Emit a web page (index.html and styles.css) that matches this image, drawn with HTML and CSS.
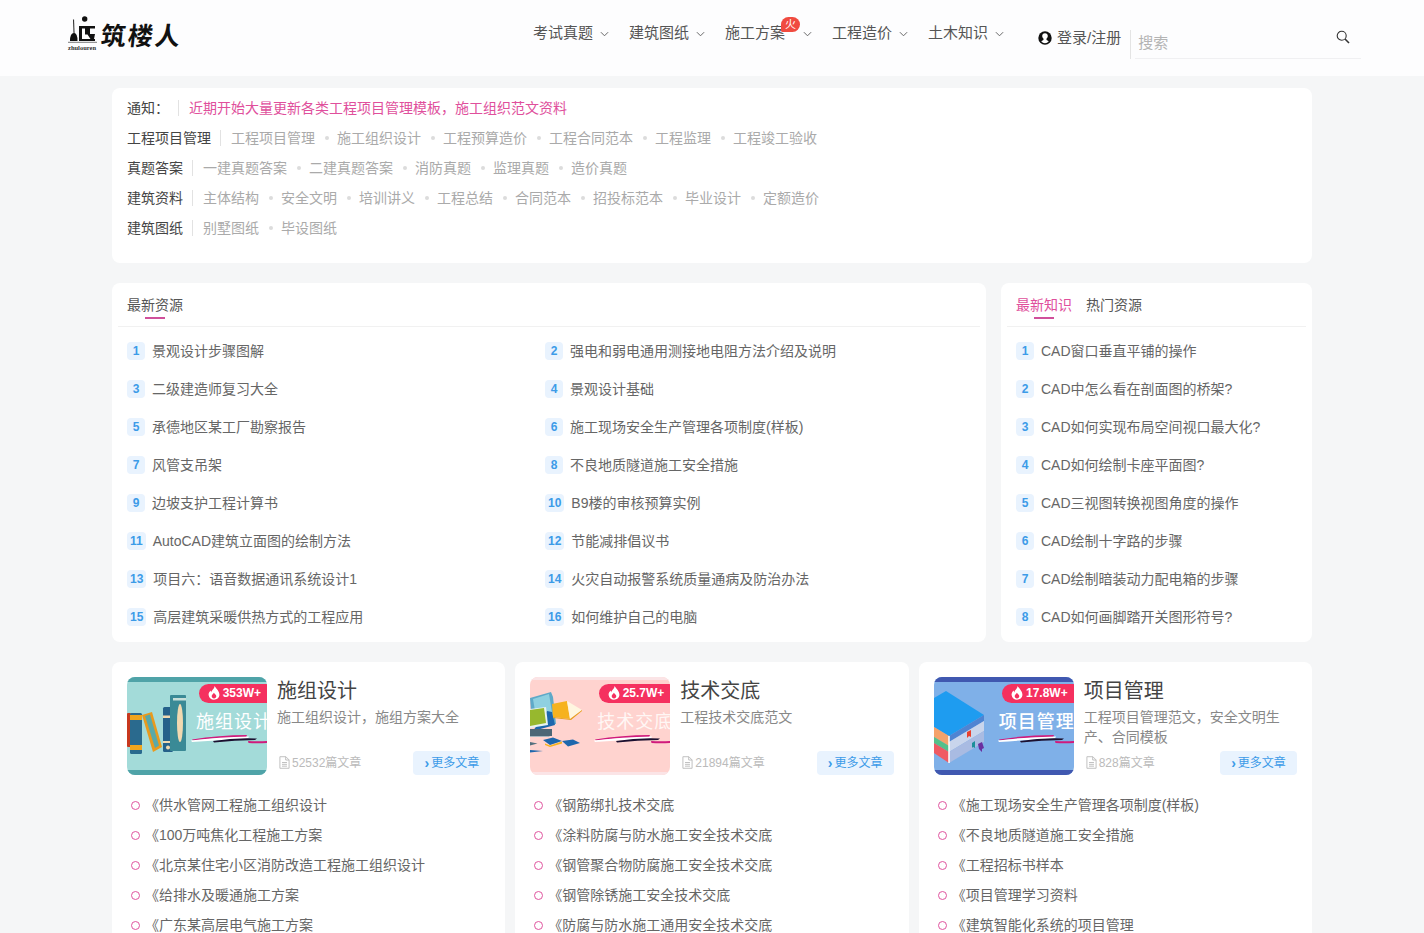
FILE: index.html
```html
<!DOCTYPE html>
<html lang="zh-CN">
<head>
<meta charset="utf-8">
<title>筑楼人</title>
<link rel="stylesheet" href="styles.css">
</head>
<body>
<svg class="defs" width="0" height="0" aria-hidden="true">
  <symbol id="flame" viewBox="0 0 12 14"><path d="M6.400 0C6.900 2.400 3.600 3.900 3.200 6.500 2.900 5.800 2.700 5.200 2.800 4.400 1.300 5.500.4 7.200.6 9c.3 2.900 2.700 4.800 5.400 4.800s5.200-1.900 5.400-4.700C11.600 5.400 8.700 3 6.400 0zM6 12.400c-1.300 0-2.300-.9-2.300-2.100 0-1.300 1.300-2 2.200-3.500 1 1.300 2.400 2.100 2.400 3.500 0 1.200-1 2.100-2.300 2.100z"/></symbol>
  <symbol id="doc" viewBox="0 0 12 14"><path d="M1 .7h6.500L11 4.200v9.100H1z M7.300.8v3.500H11 M3.300 7h5.400 M3.300 9h5.400 M3.300 11h5.400" fill="none" stroke="currentColor"/></symbol>
  <symbol id="chev" viewBox="0 0 10 6"><path d="M1 1l4 4 4-4" fill="none" stroke="currentColor" stroke-width="1.100"/></symbol>
  <symbol id="strokes" viewBox="0 0 140 98">
    <path d="M65 62.500Q92 58 120 58l-1 2.500Q92 60 66 63.500z" fill="#d01a7c"/>
    <path d="M64 63.500Q92 60 122 59.500l-1 2Q92 63 65 65z" fill="#fff"/>
    <path d="M86 64Q108 60.500 130 61.500l-2 1.500Q108 63 87 65.500z" fill="#1c1030"/>
    <path d="M121 64q10 .5 19 0v2q-10 .5-18.500 0z" fill="#d01a7c"/>
  </symbol>
</svg>

<header class="site-header">
  <a class="logo">
    <svg class="logo-mark" viewBox="0 0 32 34" width="32" height="34" aria-hidden="true">
      <circle cx="16.700" cy="3" r="2.700" fill="#111"/>
      <path d="M5.500 3.500l.6 15" stroke="#333" stroke-width="1.100"/>
      <path d="M2 25q0-8 4-8 3.500 0 3.500 8z" fill="#111"/>
      <path d="M11 10h16v2.500h-5V18h5l-1 5h1v2H11V10zm3 2.500V23h8.500l-3-4.500H17v-6z" fill="#111"/>
      <path d="M0 26.300h29" stroke="#444" stroke-width=".7"/>
    </svg>
    <span class="logo-name">筑楼人</span>
    <span class="logo-pin">zhulouren</span>
  </a>
  <nav class="nav">
    <a class="nav-item">考试真题<svg class="chev"><use href="#chev"/></svg></a>
    <a class="nav-item">建筑图纸<svg class="chev"><use href="#chev"/></svg></a>
    <a class="nav-item nav-hot">施工方案<span class="hot">火</span><svg class="chev"><use href="#chev"/></svg></a>
    <a class="nav-item">工程造价<svg class="chev"><use href="#chev"/></svg></a>
    <a class="nav-item">土木知识<svg class="chev"><use href="#chev"/></svg></a>
  </nav>
  <a class="login">
    <svg viewBox="0 0 14 14" width="14" height="14" aria-hidden="true"><circle cx="7" cy="7" r="6.700" fill="#111"/><path d="M7 2.200c1.800 0 2.800 1.300 2.800 2.900 0 1.200-.6 2.200-1.400 2.700l.2 1.200 2.200 1.300c-1 1.200-2.300 1.900-3.800 1.900s-2.800-.7-3.800-1.900L5.400 9l.2-1.200C4.800 7.300 4.200 6.300 4.200 5.100c0-1.600 1-2.900 2.800-2.900z" fill="#fff"/></svg>
    <span>登录/注册</span>
  </a>
  <div class="search">
    <span class="search-text">搜索</span>
    <svg class="search-icon" viewBox="0 0 14 14" width="14" height="14" aria-hidden="true"><circle cx="5.700" cy="5.700" r="4.500" fill="none" stroke="#333" stroke-width="1.100"/><path d="M9 9l4 4" stroke="#333" stroke-width="1.600"/></svg>
  </div>
</header>

<main class="main">
  <section class="card notice">
    <div class="row"><span class="label">通知：</span><a class="notice-link">近期开始大量更新各类工程项目管理模板，施工组织范文资料</a></div>
    <div class="row"><span class="label">工程项目管理</span><a>工程项目管理</a><a>施工组织设计</a><a>工程预算造价</a><a>工程合同范本</a><a>工程监理</a><a>工程竣工验收</a></div>
    <div class="row"><span class="label">真题答案</span><a>一建真题答案</a><a>二建真题答案</a><a>消防真题</a><a>监理真题</a><a>造价真题</a></div>
    <div class="row"><span class="label">建筑资料</span><a>主体结构</a><a>安全文明</a><a>培训讲义</a><a>工程总结</a><a>合同范本</a><a>招投标范本</a><a>毕业设计</a><a>定额造价</a></div>
    <div class="row"><span class="label">建筑图纸</span><a>别墅图纸</a><a>毕设图纸</a></div>
  </section>

  <div class="lists">
    <section class="card panel">
      <div class="tabs"><span class="tab tab-plain">最新资源</span></div>
      <ol class="rank rank-two">
        <li><b>1</b>景观设计步骤图解</li><li><b>2</b>强电和弱电通用测接地电阻方法介绍及说明</li>
        <li><b>3</b>二级建造师复习大全</li><li><b>4</b>景观设计基础</li>
        <li><b>5</b>承德地区某工厂勘察报告</li><li><b>6</b>施工现场安全生产管理各项制度(样板)</li>
        <li><b>7</b>风管支吊架</li><li><b>8</b>不良地质隧道施工安全措施</li>
        <li><b>9</b>边坡支护工程计算书</li><li><b>10</b>B9楼的审核预算实例</li>
        <li><b>11</b>AutoCAD建筑立面图的绘制方法</li><li><b>12</b>节能减排倡议书</li>
        <li><b>13</b>项目六：语音数据通讯系统设计1</li><li><b>14</b>火灾自动报警系统质量通病及防治办法</li>
        <li><b>15</b>高层建筑采暖供热方式的工程应用</li><li><b>16</b>如何维护自己的电脑</li>
      </ol>
    </section>
    <section class="card panel">
      <div class="tabs"><span class="tab tab-active">最新知识</span><span class="tab">热门资源</span></div>
      <ol class="rank">
        <li><b>1</b>CAD窗口垂直平铺的操作</li>
        <li><b>2</b>CAD中怎么看在剖面图的桥架?</li>
        <li><b>3</b>CAD如何实现布局空间视口最大化?</li>
        <li><b>4</b>CAD如何绘制卡座平面图?</li>
        <li><b>5</b>CAD三视图转换视图角度的操作</li>
        <li><b>6</b>CAD绘制十字路的步骤</li>
        <li><b>7</b>CAD绘制暗装动力配电箱的步骤</li>
        <li><b>8</b>CAD如何画脚踏开关图形符号?</li>
      </ol>
    </section>
  </div>

  <div class="cats">
    <section class="card cat">
      <div class="cat-head">
        <div class="thumb thumb-teal">
          <svg class="art" viewBox="0 0 140 98" aria-hidden="true">
            <rect width="140" height="5" fill="#4fa3a8"/><rect y="93" width="140" height="5" fill="#4fa3a8"/>
            <rect y="36" width="4" height="34" rx="1" fill="#c8381e"/>
            <rect x="3" y="36" width="12" height="41" rx="1.500" fill="#2a6a8e"/><rect x="3" y="38" width="12" height="5" fill="#f0a51e"/><rect x="3" y="68" width="12" height="5" fill="#f0a51e"/>
            <path d="M15 38l10-3 10 35-9 5z" fill="#e89a1e"/><path d="M18 39l5-1.500 9 31-4 2.500z" fill="#5aa9a8"/>
            <rect x="36" y="30" width="10" height="45" rx="1.500" fill="#25618a"/><rect x="36" y="38.500" width="10" height="2.500" fill="#f1d9b0"/><rect x="36" y="64" width="10" height="2" fill="#f1d9b0"/><circle cx="41" cy="70.500" r="2" fill="#f1d9b0"/>
            <rect x="43" y="18" width="16" height="56" rx="1" fill="#3a8a96"/><rect x="46" y="21" width="13" height="2.500" fill="#c9dfd9"/><ellipse cx="53" cy="46" rx="3" ry="19" fill="#f1d9b0"/>
            <use href="#strokes" width="140" height="98"/>
          </svg>
          <span class="thumb-title">施组设计</span>
          <span class="heat"><svg><use href="#flame"/></svg>353W+</span>
        </div>
        <div class="info">
          <h2>施组设计</h2>
          <p>施工组织设计，施组方案大全</p>
          <div class="meta"><span class="count"><svg><use href="#doc"/></svg>52532篇文章</span><a class="more"><i>›</i>更多文章</a></div>
        </div>
      </div>
      <ul class="links">
        <li>《供水管网工程施工组织设计</li>
        <li>《100万吨焦化工程施工方案</li>
        <li>《北京某住宅小区消防改造工程施工组织设计</li>
        <li>《给排水及暖通施工方案</li>
        <li>《广东某高层电气施工方案</li>
      </ul>
    </section>

    <section class="card cat">
      <div class="cat-head">
        <div class="thumb thumb-pink">
          <svg class="art" viewBox="0 0 140 98" aria-hidden="true">
            <rect width="140" height="3" fill="#fbe4e6"/><rect y="95" width="140" height="3" fill="#fbe4e6"/>
            <path d="M0 21L21 15l2 5 3 27H2z" fill="#5fa9c8"/><path d="M3 22l16-5 4 24-16 5z" fill="#8fd0e0"/>
            <path d="M17 34l5 1 3 13-22 6z" fill="#1d67ad"/>
            <path d="M0 32l16-2 2 18-18 3z" fill="#e7f2f0"/><path d="M0 33l14-2 2 15-16 3z" fill="#97b82e"/>
            <path d="M0 52h22v7H0z" fill="#4c6676"/><path d="M0 59h20l-1 1H0z" fill="#a8b7c0"/>
            <path d="M22 27l15-3 3 18-17-2z" fill="#f6b21f"/><path d="M37 24l15 9-12 9z" fill="#fff6e0"/><path d="M40 42l12-9 0 1-11 9-18-2v-1z" fill="#e8a020"/>
            <path d="M13 63l10-2.500 9 3.500-12 4z" fill="#1d67ad"/><path d="M15 66.500l5 2 12-4v2l-12 3.500-5-2z" fill="#f6b21f"/>
            <path d="M32 64l11-1.500 7 3.500-12 3.500z" fill="#1d67ad"/>
            <path d="M0 65l7.500 1.500L0 68.500z" fill="#55707f"/><path d="M0 73l13 1-13 1.500z" fill="#1d67ad"/>
            <use href="#strokes" width="140" height="98"/>
          </svg>
          <span class="thumb-title thumb-title-b">技术交底</span>
          <span class="heat"><svg><use href="#flame"/></svg>25.7W+</span>
        </div>
        <div class="info">
          <h2>技术交底</h2>
          <p>工程技术交底范文</p>
          <div class="meta"><span class="count"><svg><use href="#doc"/></svg>21894篇文章</span><a class="more"><i>›</i>更多文章</a></div>
        </div>
      </div>
      <ul class="links">
        <li>《钢筋绑扎技术交底</li>
        <li>《涂料防腐与防水施工安全技术交底</li>
        <li>《钢管聚合物防腐施工安全技术交底</li>
        <li>《钢管除锈施工安全技术交底</li>
        <li>《防腐与防水施工通用安全技术交底</li>
      </ul>
    </section>

    <section class="card cat">
      <div class="cat-head">
        <div class="thumb thumb-blue">
          <svg class="art" viewBox="0 0 140 98" aria-hidden="true">
            <rect width="140" height="5" fill="#4058b0"/><rect y="93" width="140" height="5" fill="#4058b0"/>
            <path d="M0 21l12-7 38 24-35 21L0 50z" fill="#1e9cf0"/>
            <path d="M0 50l15 9v10L0 60z" fill="#f5a26a"/><path d="M0 60l15 9v6L0 66z" fill="#55c08a"/><path d="M0 66l15 9v11L0 76z" fill="#ef5a62"/>
            <path d="M15 59l35-21v6L15 65z" fill="#4f84d2"/><path d="M15 65l35-21v10L15 75z" fill="#c9d5ec"/><path d="M15 75l35-21v11L15 86z" fill="#a9bbe2"/>
            <path d="M15 59v27" stroke="#fff" stroke-width="1.500"/>
            <path d="M33 55l4-2v7l-2-1-2 2z" fill="#e8402e"/><path d="M38 66l3-2v7l-2-1-1 1z" fill="#1b8f9a"/><path d="M44 67l4-2 2 6-2 1v3l-3-3z" fill="#6a2fa0"/>
            <use href="#strokes" width="140" height="98"/>
          </svg>
          <span class="thumb-title thumb-title-c">项目管理</span>
          <span class="heat"><svg><use href="#flame"/></svg>17.8W+</span>
        </div>
        <div class="info">
          <h2>项目管理</h2>
          <p>工程项目管理范文，安全文明生产、合同模板</p>
          <div class="meta"><span class="count"><svg><use href="#doc"/></svg>828篇文章</span><a class="more"><i>›</i>更多文章</a></div>
        </div>
      </div>
      <ul class="links">
        <li>《施工现场安全生产管理各项制度(样板)</li>
        <li>《不良地质隧道施工安全措施</li>
        <li>《工程招标书样本</li>
        <li>《项目管理学习资料</li>
        <li>《建筑智能化系统的项目管理</li>
      </ul>
    </section>
  </div>
</main>
</body>
</html>
```

FILE: styles.css
```css
* { box-sizing: border-box; }
html, body { height: 100vh; overflow: hidden; }
body {
  margin: 0;
  background: #f5f6f7;
  color: #666;
  font: 14px/20px "Liberation Sans", "Noto Sans CJK SC", sans-serif;
}
ol, ul { list-style: none; margin: 0; padding: 0; }
h2, p { margin: 0; font-weight: 400; }
.defs { position: absolute; }

/* header */
.site-header {
  display: flex;
  align-items: flex-start;
  height: 76px;
  padding-left: 68px;
  background: #fdfdfe;
}
.logo {
  position: relative;
  display: flex;
  width: 465px;
  height: 52px;
  padding-top: 16px;
  color: #111;
}
.logo-name {
  margin: 3px 0 0 1px;
  font-size: 25px;
  line-height: 30px;
  font-weight: 700;
  letter-spacing: 2px;
  transform: skewX(-6deg);
  font-family: "Noto Sans CJK SC", sans-serif;
}
.logo-pin {
  position: absolute;
  left: 0;
  top: 44px;
  font: 700 6.500px/8px "Liberation Serif", serif;
  color: #333;
}
.nav { display: flex; padding-top: 23px; font-size: 15px; }
.nav-item {
  position: relative;
  display: flex;
  align-items: center;
  height: 20px;
  margin-right: 20px;
  color: #555;
}
.chev { width: 9px; height: 6px; margin: 1px 0 0 7px; color: #666; }
.nav-hot .chev { margin-left: 18px; }
.hot {
  position: absolute;
  left: 56px;
  top: -6px;
  width: 19px;
  height: 15px;
  border-radius: 8px 8px 8px 2px;
  background: #f04b40;
  color: #fff;
  font-size: 11px;
  line-height: 15px;
  text-align: center;
}
.login {
  display: flex;
  align-items: center;
  gap: 5px;
  height: 20px;
  margin: 28px 0 0 14px;
  padding-right: 9px;
  color: #555;
  font-size: 15px;
}
.search {
  display: flex;
  justify-content: space-between;
  width: 231px;
  height: 29px;
  margin-top: 30px;
  padding-left: 7px;
  border-left: 1px solid #e4e4e4;
  background: linear-gradient(#f0f0f2, #f0f0f2) 4px 100% / 226px 1px no-repeat;
}
.search-text { margin-top: 3px; color: #b4b4b4; font-size: 15px; }
.search-icon { margin: 0 11px 0 0; }

/* main */
.main { width: 1200px; margin: 12px auto 0; }
.card { background: #fff; border-radius: 8px; }
.notice { padding: 5px 15px 20px; margin-bottom: 20px; }
.row { display: flex; align-items: center; height: 30px; color: #aaa; }
.row a { position: relative; margin-right: 22px; }
.row a + a::before {
  content: "";
  position: absolute;
  left: -12px;
  top: 8px;
  width: 4px;
  height: 4px;
  border-radius: 50%;
  background: #dcdcdc;
}
.label { position: relative; padding-right: 20px; color: #444; }
.label::after {
  content: "";
  position: absolute;
  right: 10px;
  top: 2px;
  height: 16px;
  border-right: 1px solid #e2e2e2;
}
.row .notice-link { color: #e04f9c; }

/* ranked lists */
.lists {
  display: grid;
  grid-template-columns: 874px 311px;
  justify-content: space-between;
  margin-bottom: 20px;
}
.panel { padding-bottom: 6px; }
.tabs {
  display: flex;
  gap: 14px;
  height: 44px;
  margin: 0 6px;
  padding: 12px 9px 0;
  border-bottom: 1px solid #f1f1f1;
}
.tab { position: relative; height: 30px; color: #555; }
.tab-active { color: #e04f9c; }
.tab-active::after, .tab-plain::after {
  content: "";
  position: absolute;
  left: 18px;
  top: 22px;
  width: 20px;
  height: 2px;
  background: #d0509b;
}
.rank { padding: 5px 15px 0; }
.rank-two { display: grid; grid-template-columns: 418px 418px; }
.rank li { display: flex; align-items: center; gap: 7px; height: 38px; color: #666; white-space: nowrap; }
.rank b {
  min-width: 18px;
  height: 18px;
  padding: 0 3px;
  border-radius: 4px;
  background: #e9f3fe;
  color: #3c9be8;
  font-size: 12px;
  line-height: 18px;
  text-align: center;
}

/* category cards */
.cats { display: grid; grid-template-columns: repeat(3, 1fr); gap: 10px; }
.cat { padding: 15px; }
.cat-head { display: flex; height: 98px; }
.thumb { position: relative; flex: none; width: 140px; height: 98px; overflow: hidden; border-radius: 8px; }
.thumb-teal { background: #a3dbd9; }
.thumb-pink { background: #ffd3cf; }
.thumb-blue { background: #7fb0e8; }
.art { display: block; width: 140px; height: 98px; }
.thumb-title {
  position: absolute;
  left: 69px;
  top: 33px;
  color: #fff;
  font-size: 18px;
  line-height: 24px;
  letter-spacing: 1px;
  white-space: nowrap;
}
.thumb-title-b { left: 67px; color: #fff7f5; }
.thumb-title-c { left: 65px; font-weight: 500; }
.heat {
  position: absolute;
  right: 0;
  top: 7px;
  display: flex;
  align-items: center;
  gap: 3px;
  height: 19px;
  padding: 0 6px 1px 9px;
  border-radius: 10px 0 0 10px;
  background: #f5305f;
  color: #fff;
  fill: #fff;
  font-size: 12px;
  font-weight: 700;
}
.heat svg { width: 12px; height: 14px; }
.info { position: relative; display: flex; flex: 1; flex-direction: column; padding-left: 10px; }
.info h2 { margin-top: 1px; color: #444; font-size: 20px; line-height: 26px; }
.info p { margin-top: 3px; color: #888; }
.meta { display: flex; align-items: center; justify-content: space-between; margin-top: auto; height: 24px; }
.count { display: flex; align-items: center; gap: 2px; padding: 0 0 1px 2px; color: #bbb; font-size: 12px; }
.count svg { width: 11px; height: 13px; color: #bbb; }
.more {
  display: flex;
  align-items: center;
  justify-content: center;
  gap: 2px;
  width: 77px;
  height: 24px;
  padding-bottom: 1px;
  border-radius: 4px;
  background: #e9f3fe;
  color: #3c9be8;
  font-size: 12px;
}
.more i { font-style: normal; font-weight: 700; font-size: 14px; line-height: 18px; }
.links { margin-top: 15px; }
.links li {
  display: flex;
  align-items: center;
  gap: 5px;
  height: 30px;
  padding-left: 4px;
  color: #666;
  white-space: nowrap;
}
.links li::before {
  content: "";
  flex: none;
  width: 7px;
  height: 7px;
  border: 1.500px solid #e0559f;
  border-radius: 50%;
}
```
